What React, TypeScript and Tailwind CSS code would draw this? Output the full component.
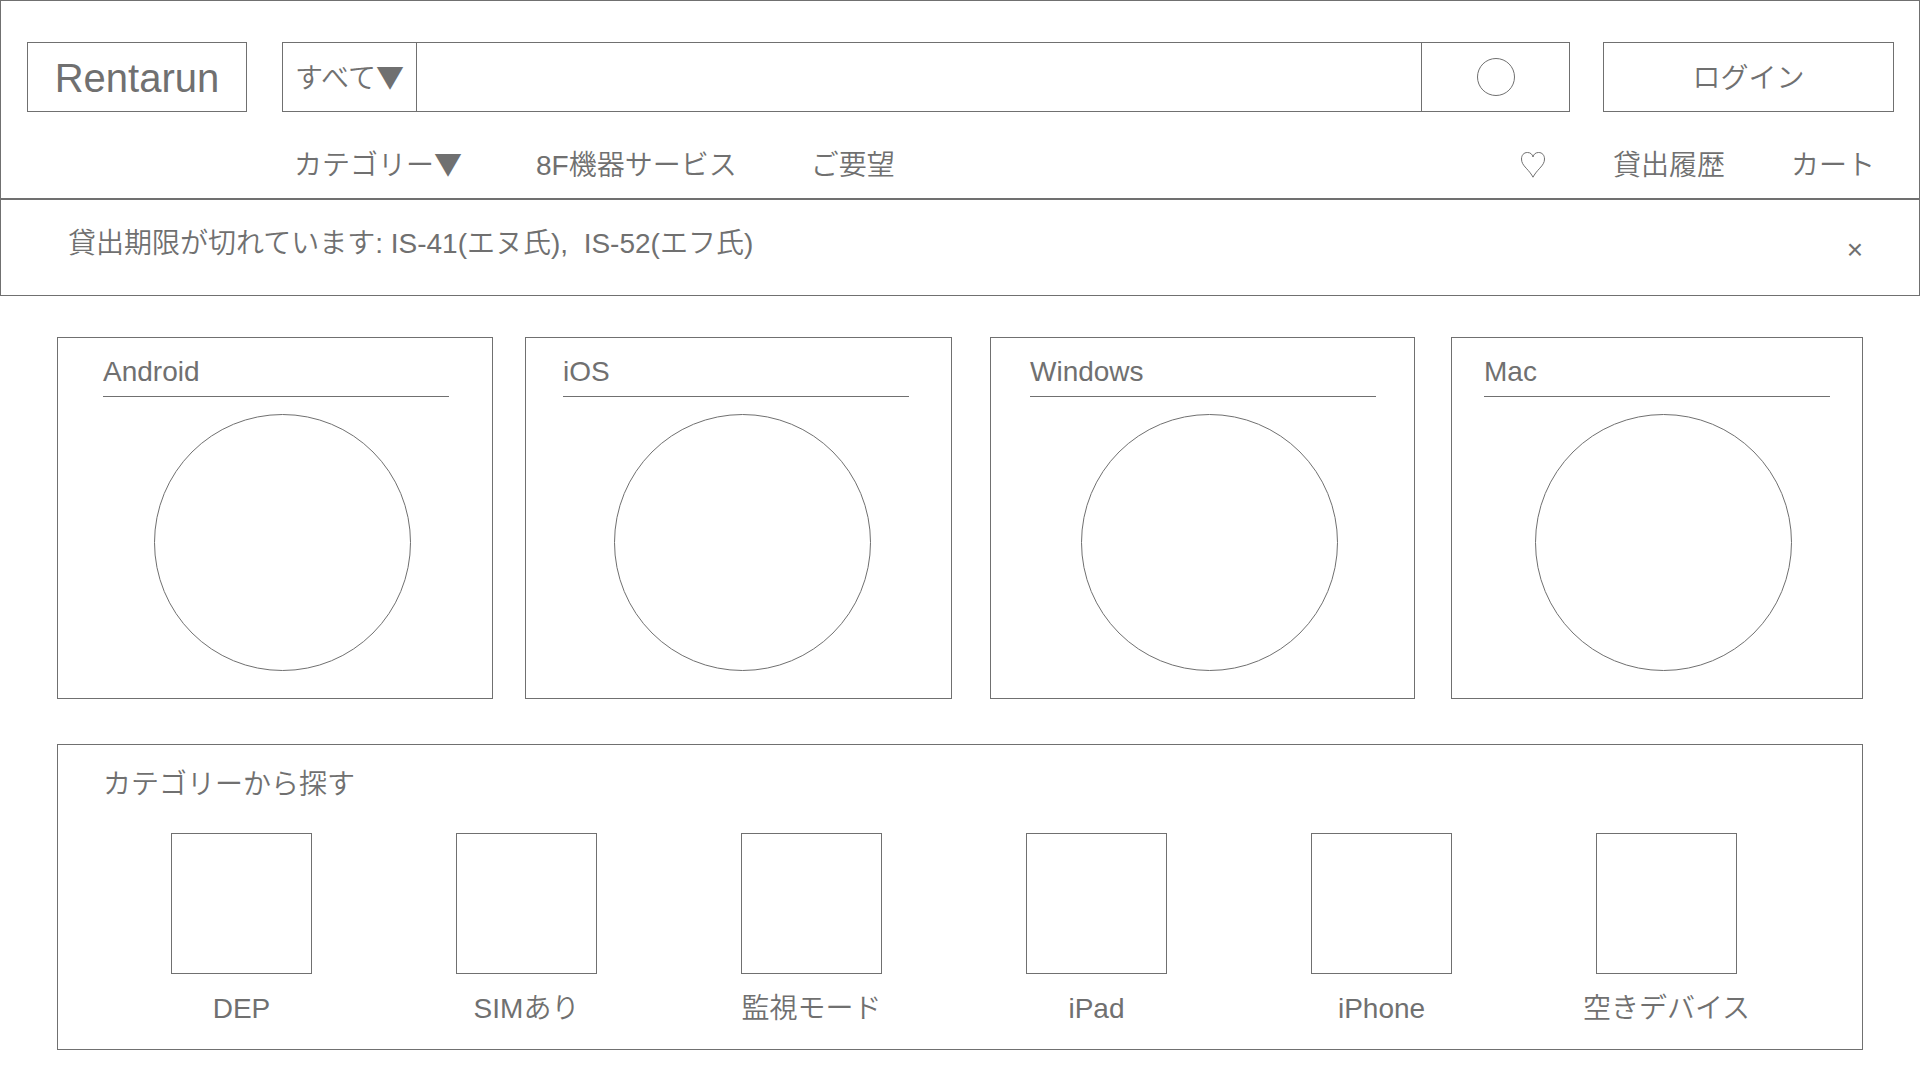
const platforms = [
  { name: "Android", card: "pl-[45px] pr-[43px]" },
  { name: "iOS", card: "ml-8 pl-[37px] pr-[42px]" },
  { name: "Windows", card: "ml-[38px] pl-[39px] pr-[38px]" },
  { name: "Mac", card: "ml-9 px-8" },
];

const categories = ["DEP", "SIMあり", "監視モード", "iPad", "iPhone", "空きデバイス"];

function HeartIcon() {
  return (
    <svg viewBox="0 0 28 28" className="size-7" fill="none" stroke="currentColor" strokeWidth="1" aria-hidden="true">
      <path d="M14 25.2C12.6 22.4 10.2 19.4 7.2 16.2C4.2 12.9 2.5 10.6 2.5 7C2.5 3.2 4.8 0.5 8.4 0.5C11.4 0.5 13.4 2.2 14 5C14.6 2.2 16.6 0.5 19.6 0.5C23.2 0.5 25.5 3.2 25.5 7C25.5 10.6 23.8 12.9 20.8 16.2C17.8 19.4 15.4 22.4 14 25.2Z" />
    </svg>
  );
}

function Header() {
  return (
    <header className="border border-b-2 border-[#707070] pt-[41px] pb-3.5">
      <div className="flex h-[70px] pr-[25px] pl-[26px]">
        <a href="#" className="flex w-[220px] items-center justify-center border border-[#707070] pt-0.5 text-[40px] leading-[48px]">
          Rentarun
        </a>
        <form className="ml-[35px] flex min-w-0 flex-1 border border-[#707070]" onSubmit={(e) => e.preventDefault()}>
          <select
            aria-label="検索対象"
            className="w-[134px] appearance-none border-r border-[#707070] bg-white pb-0.5 pl-3 font-['Noto_Sans_CJK_JP',sans-serif] outline-none"
          >
            <option>すべて▼</option>
          </select>
          <input type="search" aria-label="検索" className="min-w-0 flex-1 px-4 outline-none" />
          <button type="submit" aria-label="検索する" className="flex w-[148px] items-center justify-center border-l border-[#707070]">
            <span className="size-[38px] rounded-full border border-[#707070]" />
          </button>
        </form>
        <button type="button" className="ml-[33px] w-[291px] border border-[#707070] pt-1">
          ログイン
        </button>
      </div>
      <nav className="mt-9 flex items-center justify-between pr-11 pl-[293px]">
        <div className="flex items-center gap-[74px]">
          <button type="button">
            カテゴリー<span className="font-['Noto_Sans_CJK_JP',sans-serif] leading-none">▼</span>
          </button>
          <a href="#">8F機器サービス</a>
          <a href="#">ご要望</a>
        </div>
        <div className="flex items-center gap-[66px]">
          <a href="#" aria-label="お気に入り">
            <HeartIcon />
          </a>
          <a href="#">貸出履歴</a>
          <a href="#">カート</a>
        </div>
      </nav>
    </header>
  );
}

export default function App() {
  return (
    <div className="min-h-screen bg-white font-['Liberation_Sans','Noto_Sans_CJK_JP',sans-serif] text-[28px] leading-[36px] font-[350] text-[#707070]" lang="ja">
      <Header />
      <div role="alert" className="flex items-start justify-between border-x border-b border-[#707070] pt-[26px] pr-14 pb-[33px] pl-[67px]">
        <p className="whitespace-pre-wrap">貸出期限が切れています: IS-41(エヌ氏),  IS-52(エフ氏)</p>
        <button type="button" aria-label="閉じる" className="pt-3 leading-6">
          ×
        </button>
      </div>
      <main className="px-[57px] pt-[41px] pb-[30px]">
        <div className="grid grid-cols-[436fr_459fr_463fr_448fr]">
          {platforms.map(({ name, card }) => (
            <section key={name} className={`border border-[#707070] pt-4 pb-[27px] ${card}`}>
              <h2 className="border-b border-[#707070] pb-1.5">{name}</h2>
              <div className="mt-[17px] flex justify-center pl-3">
                <div className="size-[257px] rounded-full border border-[#707070]" />
              </div>
            </section>
          ))}
        </div>
        <section className="mt-[45px] border border-[#707070] pt-[22px] pr-[53px] pb-[22px] pl-[41px]">
          <h2 className="pl-1">カテゴリーから探す</h2>
          <ul className="mt-[30px] grid grid-cols-6">
            {categories.map((name) => (
              <li key={name}>
                <a href="#" className="flex flex-col items-center">
                  <span className="size-[141px] border border-[#707070]" />
                  <span className="mt-[17px] whitespace-nowrap">{name}</span>
                </a>
              </li>
            ))}
          </ul>
        </section>
      </main>
    </div>
  );
}
